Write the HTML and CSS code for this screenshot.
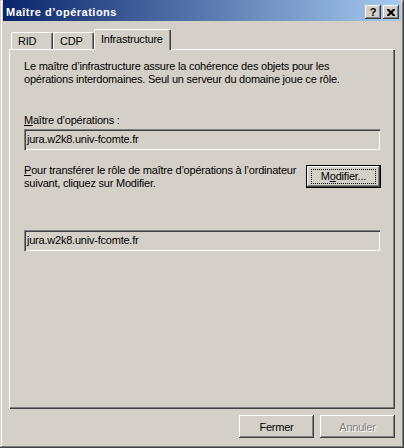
FILE: index.html
```html
<!DOCTYPE html>
<html lang="fr">
<head>
  <meta charset="UTF-8" />
  <title>Maître d'opérations</title>
  <link rel="stylesheet" href="styles.css">
</head>
<body>
  <div class="window">
    <div class="title-bar">
      <span class="title">Maître d’opérations</span>
      <div class="caption-btns">
        <button class="cap-btn">?</button>
        <button class="cap-btn close">
          <svg width="8" height="7" viewBox="0 0 8 7"><path d="M0 0h2l2 2l2-2h2v1l-2.5 2.5l2.5 2.5v1h-2l-2-2l-2 2h-2v-1l2.5-2.5l-2.5-2.5z" fill="#000"/></svg>
        </button>
      </div>
    </div>

    <div class="dialog">
      <div class="tabs">
        <div class="tab tab-rid">RID</div>
        <div class="tab tab-cdp">CDP</div>
        <div class="tab tab-infra active">Infrastructure</div>
      </div>

      <div class="panel">
        <p class="intro">Le maître d’infrastructure assure la cohérence des objets pour les<br>opérations interdomaines. Seul un serveur du domaine joue ce rôle.</p>

        <label class="field-label"><u>M</u>aître d’opérations :</label>
        <div class="readonly-box">jura.w2k8.univ-fcomte.fr</div>

        <div class="transfer-row">
          <p class="transfer-text"><u>P</u>our transférer le rôle de maître d’opérations à l’ordinateur<br>suivant, cliquez sur Modifier.</p>
          <button class="btn default"><span class="focus">M<u>o</u>difier...</span></button>
        </div>

        <div class="readonly-box target">jura.w2k8.univ-fcomte.fr</div>
      </div>

      <div class="footer">
        <button class="btn">Fermer</button>
        <button class="btn disabled">Annuler</button>
      </div>
    </div>
  </div>
</body>
</html>
```

FILE: styles.css
```css
* { box-sizing: border-box; }

body {
  margin: 0;
  font-family: "Liberation Sans", Arial, sans-serif;
  font-size: 11px;
  letter-spacing: -0.22px;
  color: #000;
  background: #d4d0c8;
}

.window {
  width: 404px;
  height: 448px;
  background: #d4d0c8;
  padding: 0 3px 3px 3px;
  box-shadow:
    inset -1px -1px #404040,
    inset 1px 1px #d4d0c8,
    inset -2px -2px #808080,
    inset 2px 2px #ffffff;
}

.title-bar {
  height: 21px;
  padding: 3px 2px 0 3px;
  display: flex;
  align-items: center;
  justify-content: space-between;
  background: linear-gradient(90deg, #0a246a, #a6caf0);
}

.title {
  color: #fff;
  font-weight: bold;
  font-size: 11px;
  letter-spacing: 0.5px;
}

.caption-btns {
  display: flex;
  gap: 2px;
}

.cap-btn {
  width: 16px;
  height: 14px;
  padding: 0;
  border: none;
  background: #d4d0c8;
  font-family: "Liberation Sans", Arial, sans-serif;
  font-weight: bold;
  font-size: 11px;
  line-height: 12px;
  display: flex;
  align-items: center;
  justify-content: center;
  box-shadow:
    inset -1px -1px #404040,
    inset 1px 1px #ffffff,
    inset -2px -2px #808080;
}

.dialog {
  padding: 8px 6px 0 6px;
}

.tabs {
  display: flex;
  align-items: flex-end;
  height: 20px;
  padding-left: 2px;
}

.tab {
  height: 17px;
  padding: 2px 0 0 6px;
  border-top: 1px solid #fff;
  border-left: 1px solid #fff;
  border-right: 1px solid #404040;
  border-radius: 2px 2px 0 0;
  box-shadow: inset -1px 0 #808080;
  line-height: 13px;
}

.tab-rid { width: 42px; }
.tab-cdp { width: 41px; }

.tab-infra {
  width: 77px;
}

.tab.active {
  position: relative;
  z-index: 1;
  height: 21px;
  margin-bottom: -1px;
  padding-top: 3px;
  background: #d4d0c8;
}

.panel {
  height: 360px;
  padding: 11px 15px 0 15px;
  box-shadow:
    inset 1px 1px #ffffff,
    inset -1px -1px #404040,
    inset -2px -2px #808080;
}

.intro {
  margin: 0;
  line-height: 13px;
  white-space: nowrap;
}

.field-label {
  display: block;
  margin-top: 28px;
  line-height: 13px;
}

.readonly-box {
  width: 356px;
  height: 21px;
  margin-top: 2px;
  padding: 3px 0 0 3px;
  line-height: 14px;
  box-shadow:
    inset 1px 1px #808080,
    inset 2px 2px #404040,
    inset -1px -1px #ffffff,
    inset -2px -2px #d4d0c8;
}

.readonly-box.target {
  margin-top: 40px;
}

.transfer-row {
  display: flex;
  justify-content: space-between;
  align-items: flex-start;
  width: 357px;
  margin-top: 14px;
}

.transfer-text {
  margin: 0;
  line-height: 13px;
  white-space: nowrap;
}

.btn {
  width: 75px;
  height: 23px;
  padding: 0;
  border: none;
  background: #d4d0c8;
  font-family: "Liberation Sans", Arial, sans-serif;
  font-size: 11px;
  letter-spacing: -0.22px;
  color: #000;
  box-shadow:
    inset -1px -1px #404040,
    inset 1px 1px #ffffff,
    inset -2px -2px #808080;
}

.btn.default {
  margin-top: 1px;
  display: flex;
  align-items: center;
  justify-content: center;
  box-shadow:
    inset 0 0 0 1px #000,
    inset -2px -2px #404040,
    inset 2px 2px #ffffff,
    inset -3px -3px #808080;
}

.btn .focus {
  display: block;
  width: 65px;
  height: 15px;
  line-height: 13px;
  border: 1px dotted #000;
}

.btn.disabled {
  color: #808080;
  text-shadow: 1px 1px #fff;
}

.footer {
  display: flex;
  justify-content: flex-end;
  gap: 6px;
  margin-top: 6px;
}
```
